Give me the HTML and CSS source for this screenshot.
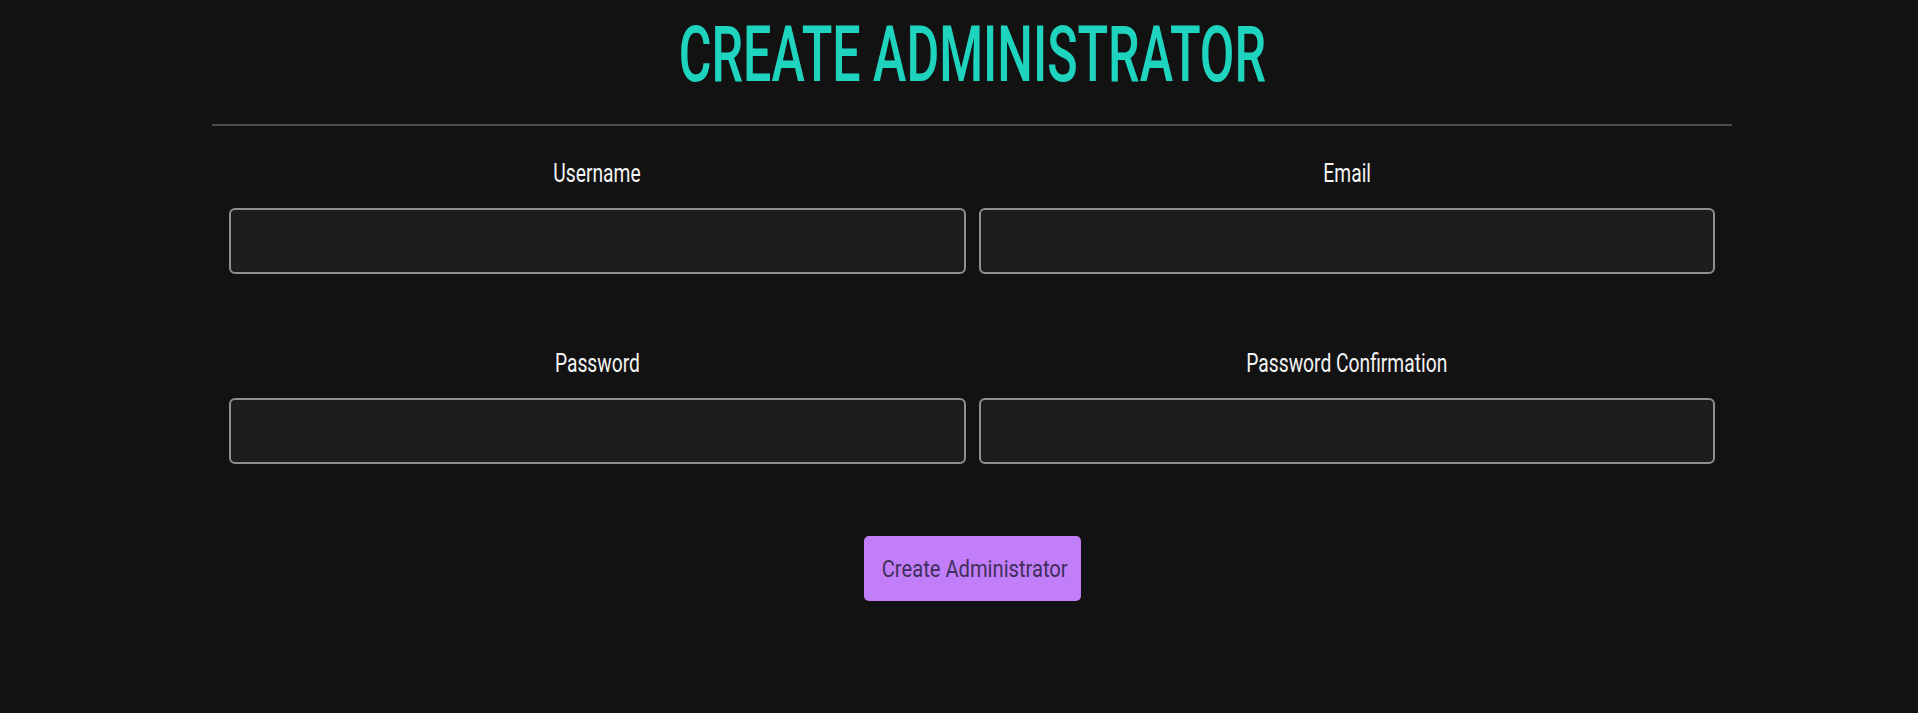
FILE: index.html
```html
<!DOCTYPE html>
<html lang="en">
<head>
<meta charset="utf-8">
<title>Create Administrator</title>
<link rel="stylesheet" href="styles.css">
</head>
<body>
<main class="panel">
  <h1 class="title"><span class="title-text">CREATE ADMINISTRATOR</span></h1>
  <hr class="divider">
  <form class="form">
    <div class="fields">
      <div class="field">
        <label class="label" for="username"><span class="label-text">Username</span></label>
        <input class="input" id="username" type="text">
      </div>
      <div class="field">
        <label class="label" for="email"><span class="label-text">Email</span></label>
        <input class="input" id="email" type="email">
      </div>
      <div class="field">
        <label class="label" for="password"><span class="label-text">Password</span></label>
        <input class="input" id="password" type="password">
      </div>
      <div class="field">
        <label class="label" for="password2"><span class="label-text">Password Confirmation</span></label>
        <input class="input" id="password2" type="password">
      </div>
    </div>
    <div class="actions">
      <button class="button" type="button"><span class="button-text">Create Administrator</span></button>
    </div>
  </form>
</main>
</body>
</html>
```

FILE: styles.css
```css
html, body {
  margin: 0;
  padding: 0;
  background: #121212;
}
body {
  font-family: Roboto, "Liberation Sans", sans-serif;
  color: #f2f2f2;
}
.panel {
  width: 1520px;
  margin-left: 212px;
  padding-top: 17px;
}
.title {
  margin: 0;
  font-size: 77px;
  line-height: 77px;
  font-weight: 500;
  color: #1fd4bf;
  text-align: center;
  white-space: nowrap;
}
.title-text {
  display: inline-block;
  transform: scaleX(0.652);
}
.divider {
  margin: 30px 0 0 0;
  border: 0;
  height: 2px;
  background: #4b4b4b;
}
.form {
  padding: 34px 17px 0 17px;
}
.fields {
  display: grid;
  grid-template-columns: 1fr 1fr;
  column-gap: 13px;
  row-gap: 76px;
}
.field {
  display: flex;
  flex-direction: column;
  align-items: stretch;
  gap: 22px;
}
.label {
  font-size: 26px;
  line-height: 26px;
  text-align: center;
  color: #f4f4f4;
  white-space: nowrap;
}
.label-text {
  display: inline-block;
  transform: scaleX(0.74);
}
.input {
  box-sizing: border-box;
  height: 66px;
  margin: 0;
  border: 2px solid #8f8f8f;
  border-radius: 6px;
  background: #1c1c1c;
  color: #f2f2f2;
  font-family: inherit;
  font-size: 22px;
  padding: 0 14px;
  outline: none;
}
.actions {
  display: flex;
  justify-content: center;
  padding-top: 72px;
}
.button {
  width: 217px;
  height: 65px;
  border: 0;
  border-radius: 5px;
  background: #c27ef8;
  color: #3e2f5c;
  font-family: inherit;
  font-size: 24px;
  padding: 0;
  cursor: pointer;
  white-space: nowrap;
}
.button-text {
  display: inline-block;
  transform: scaleX(0.84);
}
```
